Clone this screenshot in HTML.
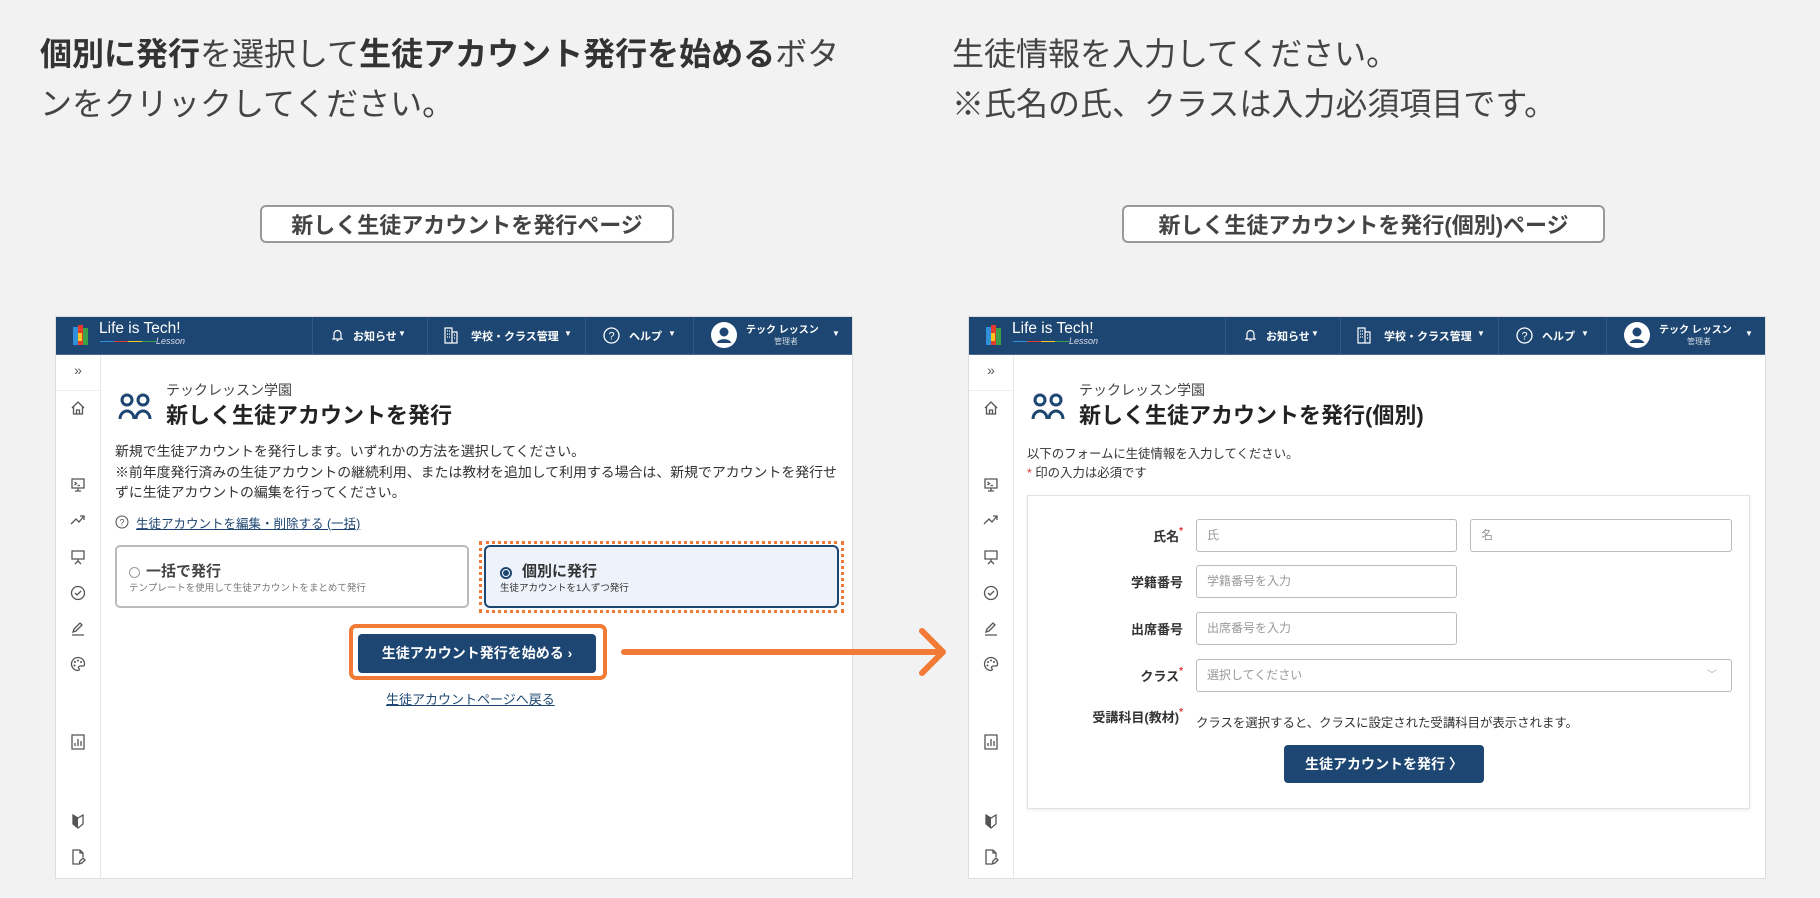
<!DOCTYPE html>
<html><head><meta charset="utf-8"><style>
*{box-sizing:border-box;margin:0;padding:0}
body{width:1820px;height:898px;background:#f2f2f2;font-family:"Liberation Sans","Noto Sans CJK JP",sans-serif;position:relative;overflow:hidden;color:#333}
.a{position:absolute;white-space:nowrap}
.h1{font-size:32px;color:#444;line-height:48px}
.h1 b{font-weight:700;color:#333}
.lab{position:absolute;top:205px;height:38px;border:2px solid #999;border-radius:6px;background:#fff;font-size:22px;font-weight:700;color:#444;display:flex;align-items:center;justify-content:center}
.panel{position:absolute;top:316px;width:798px;height:563px;background:#fff;border:1px solid #ddd}
.hd{position:absolute;left:0;top:0;width:100%;height:38px;background:#1d4672;border-bottom:1px solid #4a6a90;color:#fff}
.dv{position:absolute;top:0;width:1px;height:37px;background:#35587f}
.ht{position:absolute;top:11px;font-size:11px;font-weight:700;color:#fff}
.car{position:absolute;top:12px;font-size:8px;color:#fff}
.sb{position:absolute;left:0;top:38px;width:45px;height:524px;border-right:1px solid #e8e8e8}
.sb svg{position:absolute;left:14px}
.inp{position:absolute;height:33px;border:1px solid #bbb;border-radius:3px;font-size:12px;color:#999;padding:0 10px;line-height:31px}
.fl{position:absolute;font-size:13px;font-weight:700;color:#333;text-align:right;width:160px}
.fl i{color:#d33;font-style:normal;font-size:10px;vertical-align:top}
</style></head><body>

<div class="a h1" style="left:40px;top:30px"><b>個別に発行</b>を選択して<b>生徒アカウント発行を始める</b>ボタ</div>
<div class="a h1" style="left:40px;top:80px">ンをクリックしてください。</div>
<div class="a h1" style="left:952px;top:30px">生徒情報を入力してください。</div>
<div class="a h1" style="left:952px;top:80px">※氏名の氏、クラスは入力必須項目です。</div>

<div class="lab" style="left:260px;width:414px">新しく生徒アカウントを発行ページ</div>
<div class="lab" style="left:1122px;width:483px">新しく生徒アカウントを発行(個別)ページ</div>

<div class="panel" style="left:55px" id="p1"></div>
<div class="panel" style="left:968px" id="p2"></div>

<template id="chrome">
<div class="hd">
  <div style="position:absolute;left:17px;top:8px;width:16px;height:20px">
    <div style="position:absolute;left:0;top:2px;width:5px;height:18px;background:#2f8fd8"></div>
    <div style="position:absolute;left:5px;top:0;width:5px;height:20px;background:#e53b2f"></div>
    <div style="position:absolute;left:10px;top:3px;width:5px;height:17px;background:#3aa148"></div>
    <div style="position:absolute;left:5px;top:8px;width:4px;height:8px;background:#f4c81e"></div>
  </div>
  <div class="a" style="left:43px;top:3px;font-size:15.5px;color:#fff">Life is Tech!</div>
  <div style="position:absolute;left:44px;top:24px;width:56px;height:1px;background:linear-gradient(90deg,#2f8fd8 25%,#e53b2f 25% 50%,#f4c81e 50% 75%,#3aa148 75%)"></div>
  <div class="a" style="left:100px;top:19px;font-size:9px;font-style:italic;color:#dde">Lesson</div>
  <div class="dv" style="left:256px"></div><div class="dv" style="left:371px"></div><div class="dv" style="left:529px"></div><div class="dv" style="left:637px"></div>
  <svg class="a" style="left:276px;top:11px" width="11" height="14" viewBox="0 0 11 14"><path d="M2 10V6a3.5 3.5 0 0 1 7 0v4l1 1H1z M4.5 12.5h2" fill="none" stroke="#fff" stroke-width="1.2"/></svg>
  <div class="ht" style="left:297px">お知らせ</div><div class="car" style="left:342px">▼</div>
  <svg class="a" style="left:388px;top:10px" width="14" height="17" viewBox="0 0 14 17"><path d="M1 1h7v15H1z M8 5h5v11H8z M3 4h1M5 4h1M3 7h1M5 7h1M3 10h1M5 10h1M10 8h1M10 11h1" fill="none" stroke="#fff" stroke-width="1.2"/></svg>
  <div class="ht" style="left:415px">学校・クラス管理</div><div class="car" style="left:508px">▼</div>
  <svg class="a" style="left:547px;top:10px" width="17" height="17" viewBox="0 0 17 17"><circle cx="8.5" cy="8.5" r="7.5" fill="none" stroke="#fff" stroke-width="1.3"/><text x="8.5" y="12.5" font-size="11" fill="#fff" text-anchor="middle" font-family="Liberation Sans">?</text></svg>
  <div class="ht" style="left:573px">ヘルプ</div><div class="car" style="left:612px">▼</div>
  <svg class="a" style="left:655px;top:5px" width="26" height="26" viewBox="0 0 26 26"><circle cx="13" cy="13" r="13" fill="#fff"/><circle cx="13" cy="10" r="4.5" fill="#1d4672"/><path d="M5.5 21a8 6 0 0 1 15 0" fill="#1d4672"/></svg>
  <div class="a" style="left:690px;top:4px;font-size:10px;font-weight:700;color:#fff">テック レッスン</div>
  <div class="a" style="left:718px;top:19px;font-size:8px;color:#cfd8e3">管理者</div>
  <div class="car" style="left:776px">▼</div>
</div>
<div class="sb">
  <div style="height:36px;border-bottom:1px solid #eee;font-size:14px;color:#555;text-align:center;line-height:30px">»</div>
  <svg style="top:45px" width="16" height="16" viewBox="0 0 16 16"><path d="M2 8L8 2l6 6M3.5 7v7h9V7M6.5 14v-4h3v4" fill="none" stroke="#555" stroke-width="1.3"/></svg>
  <svg style="top:122px" width="16" height="16" viewBox="0 0 16 16"><path d="M2 2h12v9H2zM8 11v3M5 14h6M4.5 5l2 1.5-2 1.5M7.5 8.5h2.5" fill="none" stroke="#555" stroke-width="1.3"/></svg>
  <svg style="top:157px" width="16" height="16" viewBox="0 0 16 16"><path d="M1 12l5-5 3 3 5-6M10 4h4v4" fill="none" stroke="#555" stroke-width="1.3"/></svg>
  <svg style="top:194px" width="16" height="16" viewBox="0 0 16 16"><path d="M2 2h12v8H2zM8 10v2M5 15l3-3 3 3" fill="none" stroke="#555" stroke-width="1.3"/></svg>
  <svg style="top:230px" width="16" height="16" viewBox="0 0 16 16"><circle cx="8" cy="8" r="6.5" fill="none" stroke="#555" stroke-width="1.3"/><path d="M5 8l2 2 4-4" fill="none" stroke="#555" stroke-width="1.3"/></svg>
  <svg style="top:265px" width="16" height="16" viewBox="0 0 16 16"><path d="M3 12l1-3 6-6 2 2-6 6zM2 15h12" fill="none" stroke="#555" stroke-width="1.3"/></svg>
  <svg style="top:301px" width="16" height="16" viewBox="0 0 16 16"><path d="M8 1.5a6.5 6.5 0 1 0 0 13c1.5 0 1.5-1.5.8-2.2-.8-.8 0-2.3 1.5-2.3H13a1.5 1.5 0 0 0 1.5-1.5A6.5 6.5 0 0 0 8 1.5z" fill="none" stroke="#555" stroke-width="1.3"/><circle cx="5" cy="6" r="1" fill="#555"/><circle cx="8" cy="4.5" r="1" fill="#555"/><circle cx="11" cy="6" r="1" fill="#555"/><circle cx="4.5" cy="9.5" r="1" fill="#555"/></svg>
  <svg style="top:379px" width="16" height="16" viewBox="0 0 16 16"><path d="M2 1h12v14H2zM5 12V9M8 12V5M11 12V7" fill="none" stroke="#555" stroke-width="1.3"/></svg>
  <svg style="top:458px" width="16" height="16" viewBox="0 0 16 16"><path d="M3 2l5 3 5-3v9l-5 4-5-4z" fill="none" stroke="#555" stroke-width="1.3"/><path d="M3 2l5 3v10l-5-4z" fill="#555"/></svg>
  <svg style="top:494px" width="16" height="16" viewBox="0 0 16 16"><path d="M10 1H3v14h5M10 1l3 3v4M10 1v3h3M9 15l1-3 3-3 2 2-3 3z" fill="none" stroke="#555" stroke-width="1.3"/></svg>
</div>
<svg class="a" style="left:62px;top:76px" width="34" height="28" viewBox="0 0 34 28"><circle cx="9" cy="7" r="5" fill="none" stroke="#1d4672" stroke-width="3"/><circle cx="25" cy="7" r="5" fill="none" stroke="#1d4672" stroke-width="3"/><path d="M2 26a7 8 0 0 1 14 0M18 26a7 8 0 0 1 14 0" fill="none" stroke="#1d4672" stroke-width="3"/></svg>
<div class="a" style="left:110px;top:63px;font-size:14px;color:#444">テックレッスン学園</div>
</template>

<script>
var t=document.getElementById('chrome').innerHTML;
document.getElementById('p1').innerHTML=t+`
<div class="a" style="left:110px;top:81px;font-size:22px;font-weight:700;color:#222">新しく生徒アカウントを発行</div>
<div class="a" style="left:59px;top:124px;font-size:13.9px;line-height:20.5px;color:#333">新規で生徒アカウントを発行します。いずれかの方法を選択してください。<br>※前年度発行済みの生徒アカウントの継続利用、または教材を追加して利用する場合は、新規でアカウントを発行せ<br>ずに生徒アカウントの編集を行ってください。</div>
<svg class="a" style="left:59px;top:198px" width="14" height="14" viewBox="0 0 14 14"><circle cx="7" cy="7" r="6" fill="none" stroke="#555" stroke-width="1.1"/><text x="7" y="10.5" font-size="9" fill="#555" text-anchor="middle" font-family="Liberation Sans">?</text></svg>
<div class="a" style="left:80px;top:196px;font-size:12.5px;color:#1d4672;text-decoration:underline">生徒アカウントを編集・削除する (一括)</div>
<div class="a" style="left:59px;top:228px;width:354px;height:63px;border:2px solid #bbb;border-radius:5px"></div>
<div class="a" style="left:73px;top:250px;width:11px;height:11px;border:1px solid #999;border-radius:50%"></div>
<div class="a" style="left:90px;top:243px;font-size:15px;font-weight:700;color:#444">一括で発行</div>
<div class="a" style="left:73px;top:263px;font-size:9.5px;color:#777">テンプレートを使用して生徒アカウントをまとめて発行</div>
<div class="a" style="left:423px;top:224px;width:365px;height:72px;border:3px dotted #f07a36"></div>
<div class="a" style="left:428px;top:228px;width:355px;height:63px;border:2px solid #1d4672;border-radius:6px;background:#eef3fb"></div>
<div class="a" style="left:444px;top:250px;width:12px;height:12px;border:2px solid #1d4672;border-radius:50%;background:#fff"></div>
<div class="a" style="left:447px;top:253px;width:6px;height:6px;border-radius:50%;background:#1d4672"></div>
<div class="a" style="left:466px;top:243px;font-size:15px;font-weight:700;color:#333">個別に発行</div>
<div class="a" style="left:444px;top:263px;font-size:9.5px;color:#333">生徒アカウントを1人ずつ発行</div>
<div class="a" style="left:293px;top:307px;width:258px;height:56px;border:4px solid #f07a36;border-radius:7px"></div>
<div class="a" style="left:302px;top:317px;width:238px;height:39px;background:#1d4672;border-radius:4px;color:#fff;font-size:14px;font-weight:700;text-align:center;line-height:39px">生徒アカウント発行を始める ›</div>
<div class="a" style="left:330px;top:372px;font-size:13px;color:#1d4672;text-decoration:underline">生徒アカウントページへ戻る</div>
`;
document.getElementById('p2').innerHTML=t+`
<div class="a" style="left:110px;top:81px;font-size:22px;font-weight:700;color:#222">新しく生徒アカウントを発行(個別)</div>
<div class="a" style="left:58px;top:127px;font-size:12.4px;color:#333">以下のフォームに生徒情報を入力してください。</div>
<div class="a" style="left:58px;top:146px;font-size:12.4px;color:#333"><span style="color:#d33">*</span> 印の入力は必須です</div>
<div class="a" style="left:58px;top:178px;width:723px;height:314px;border:1px solid #e3e3e3;box-shadow:0 1px 3px rgba(0,0,0,.08)"></div>
<div class="fl" style="left:54px;top:209px">氏名<i>*</i></div>
<div class="inp" style="left:227px;top:202px;width:261px">氏</div>
<div class="inp" style="left:501px;top:202px;width:262px">名</div>
<div class="fl" style="left:54px;top:255px">学籍番号</div>
<div class="inp" style="left:227px;top:248px;width:261px">学籍番号を入力</div>
<div class="fl" style="left:54px;top:302px">出席番号</div>
<div class="inp" style="left:227px;top:295px;width:261px">出席番号を入力</div>
<div class="fl" style="left:54px;top:349px">クラス<i>*</i></div>
<div class="inp" style="left:227px;top:342px;width:536px">選択してください<span style="position:absolute;right:14px;top:0;color:#aaa;font-size:10px">﹀</span></div>
<div class="fl" style="left:54px;top:390px">受講科目(教材)<i>*</i></div>
<div class="a" style="left:227px;top:396px;font-size:12.4px;color:#333">クラスを選択すると、クラスに設定された受講科目が表示されます。</div>
<div class="a" style="left:315px;top:428px;width:200px;height:38px;background:#1d4672;border-radius:4px;color:#fff;font-size:14px;font-weight:700;text-align:center;line-height:38px">生徒アカウントを発行 〉</div>
`;
</script>

<svg class="a" style="left:0;top:0" width="1820" height="898"><path d="M624 652H943M922 631l21 21-21 21" fill="none" stroke="#f07a36" stroke-width="6" stroke-linecap="round" stroke-linejoin="round"/></svg>
</body></html>
